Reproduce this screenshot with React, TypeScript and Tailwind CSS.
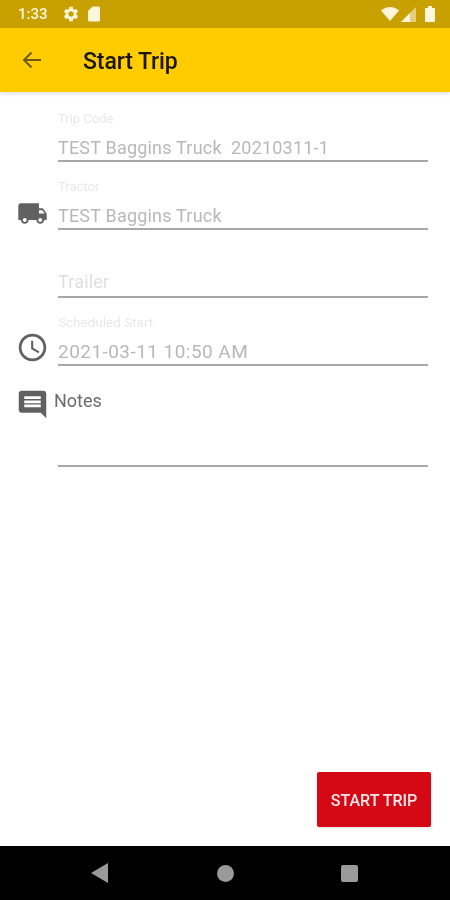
import type { ReactNode } from 'react';

const TRUCK = 'M20 8h-3V4H3c-1.1 0-2 .9-2 2v11h2c0 1.66 1.34 3 3 3s3-1.34 3-3h6c0 1.66 1.34 3 3 3s3-1.34 3-3h2v-5l-3-4zM6 18.5c-.83 0-1.5-.67-1.5-1.5s.67-1.5 1.5-1.5 1.5.67 1.5 1.5-.67 1.5-1.5 1.5zm13.5-9l1.96 2.5H17V9.5h2.5zm-1.5 9c-.83 0-1.5-.67-1.5-1.5s.67-1.5 1.5-1.5 1.5.67 1.5 1.5-.67 1.5-1.5 1.5z';
const CLOCK = 'M11.99 2C6.47 2 2 6.48 2 12s4.47 10 9.99 10C17.52 22 22 17.52 22 12S17.52 2 11.99 2zM12 20c-4.42 0-8-3.58-8-8s3.58-8 8-8 8 3.58 8 8-3.58 8-8 8zm.5-13H11v6l5.25 3.15.75-1.23-4.5-2.67z';
const NOTES = 'M21.99 4c0-1.1-.89-2-1.99-2H4c-1.1 0-2 .9-2 2v12c0 1.1.9 2 2 2h14l4 4-.01-18zM18 14H6v-2h12v2zm0-3H6V9h12v2zm0-3H6V6h12v2z';
const GEAR = 'M19.14 12.94c.04-.3.06-.61.06-.94 0-.32-.02-.64-.07-.94l2.03-1.58c.18-.14.23-.41.12-.61l-1.92-3.32c-.12-.22-.37-.29-.59-.22l-2.39.96c-.5-.38-1.03-.7-1.62-.94l-.36-2.54c-.04-.24-.24-.41-.48-.41h-3.84c-.24 0-.43.17-.47.41l-.36 2.54c-.59.24-1.13.57-1.62.94l-2.39-.96c-.22-.08-.47 0-.59.22L2.74 8.87c-.12.21-.08.47.12.61l2.03 1.58c-.05.3-.09.63-.09.94s.02.64.07.94l-2.03 1.58c-.18.14-.23.41-.12.61l1.92 3.32c.12.22.37.29.59.22l2.39-.96c.5.38 1.03.7 1.62.94l.36 2.54c.05.24.24.41.48.41h3.84c.24 0 .44-.17.47-.41l.36-2.54c.59-.24 1.13-.56 1.62-.94l2.39.96c.22.08.47 0 .59-.22l1.92-3.32c.12-.22.07-.47-.12-.61l-2.01-1.58zM12 15.6c-1.98 0-3.6-1.62-3.6-3.6s1.62-3.6 3.6-3.6 3.6 1.62 3.6 3.6-1.62 3.6-3.6 3.6z';
const SD = 'M18 2h-8L4 8v12c0 1.1.9 2 2 2h12c1.1 0 2-.9 2-2V4c0-1.1-.9-2-2-2z';

function Icon({ d, size, className }: { d: string; size: number; className?: string }) {
  return (
    <svg width={size} height={size} viewBox="0 0 24 24" fill="currentColor" className={className}>
      <path d={d} />
    </svg>
  );
}

function Field({ label, value, placeholder, icon, valueClass, labelClass }: { label?: string; value?: string; placeholder?: string; icon?: ReactNode; valueClass?: string; labelClass?: string }) {
  return (
    <div className="flex h-[53px] mb-[15px]">
      <div className="w-[58px] flex items-end justify-start pl-[17px] pb-[1px] shrink-0">{icon}</div>
      <div className="w-[370px] flex flex-col border-b-2 border-[#a8a8a8]">
        <div className={`h-[21px] leading-[19px] text-[#e8e8e8] ${labelClass ?? 'text-[13px]'}`}>{label}</div>
        <div className={`h-[30px] whitespace-pre ${placeholder ? 'leading-[32px] text-[#dedede]' : 'leading-[35px] text-[#b8b8b8]'} ${valueClass ?? 'text-[18px] tracking-[0.2px]'}`}>
          {value ?? placeholder}
        </div>
      </div>
    </div>
  );
}

export default function App() {
  return (
    <div className="w-[450px] h-[900px] flex flex-col bg-white overflow-hidden blur-[0.5px] font-['Roboto',sans-serif]">
      {/* Status bar */}
      <div className="h-[28px] shrink-0 bg-[#c8a000] flex items-center pl-[18px] pr-[15px] text-[#fdf6dc]">
        <span className="text-[15px] font-medium w-[44px]">1:33</span>
        <Icon d={GEAR} size={18} className="mr-[5px]" />
        <Icon d={SD} size={18} />
        <div className="flex-1" />
        <svg width="18" height="14" viewBox="0 0 18 14" fill="currentColor" className="mr-[2px]">
          <path d="M0 3.5C2.5 1.2 5.6 0 9 0s6.500 1.200 9 3.500L9 14z" />
        </svg>
        <svg width="15" height="15" viewBox="0 0 15 15" className="mr-[9px]">
          <path d="M15 0v15H0z" fill="#e3cf7d" />
          <path d="M9 6v9H0z" fill="#fdf6dc" />
        </svg>
        <svg width="10" height="16" viewBox="0 0 10 16" fill="currentColor">
          <path d="M3 0h4v2h2c.6 0 1 .4 1 1v12c0 .6-.4 1-1 1H1c-.6 0-1-.4-1-1V3c0-.6.4-1 1-1h2z" />
        </svg>
      </div>

      {/* App bar */}
      <div className="h-[64px] shrink-0 bg-[#ffcc00] flex items-center pl-[20px] shadow-[0_2px_4px_rgba(0,0,0,0.12)] relative">
        <svg width="24" height="24" viewBox="0 0 24 24" fill="none" stroke="#6b5a10" strokeWidth="2" className="mr-[39px]">
          <path d="M21 12H4M11.500 4.500 4 12l7.500 7.500" />
        </svg>
        <h1 className="text-[23px] font-medium text-[#1a1608] pt-[4px] tracking-[-0.1px]">Start Trip</h1>
      </div>

      {/* Form */}
      <div className="flex-1 flex flex-col pt-[17px]">
        <Field label="Trip Code" value="TEST Baggins Truck  20210311-1" />
        <Field label="Tractor" value="TEST Baggins Truck" icon={<Icon d={TRUCK} size={31} className="text-[#616161]" />} />
        <Field placeholder="Trailer" />
        <Field label="Scheduled Start" labelClass="text-[13.5px]" valueClass="text-[19px] tracking-[0.45px]" value="2021-03-11 10:50 AM" icon={<Icon d={CLOCK} size={33} className="text-[#616161] -ml-[1px] mb-[1px]" />} />
        <div className="flex h-[86px]">
          <div className="w-[54px] pl-[16px] pt-[7px] shrink-0">
            <Icon d={NOTES} size={33} className="text-[#616161]" />
          </div>
          <div className="w-[374px] flex flex-col">
            <div className="text-[18px] leading-[24px] pt-[8px] text-[#6b6b6b]">Notes</div>
            <div className="mt-auto ml-[4px] border-b-2 border-[#a8a8a8]" />
          </div>
        </div>
      </div>

      {/* Action */}
      <div className="flex justify-end pr-[19px] pb-[19px]">
        <button className="w-[114px] h-[55px] pt-[2px] rounded-[2px] bg-[#d50916] text-[#fde8e8] text-[16px] font-medium shadow-sm">
          START TRIP
        </button>
      </div>

      {/* Navigation bar */}
      <div className="h-[54px] shrink-0 bg-black flex items-center justify-center text-[#9a9a9a]">
        <div className="relative w-[450px] h-[54px]">
          <svg width="18" height="20" viewBox="0 0 18 20" fill="currentColor" className="absolute left-[91px] top-[17px]">
            <path d="M17 0v20L0 10z" />
          </svg>
          <div className="absolute left-[217px] top-[19px] w-[17px] h-[17px] rounded-full bg-[#9a9a9a]" />
          <div className="absolute left-[341px] top-[19px] w-[17px] h-[17px] rounded-[2px] bg-[#9a9a9a]" />
        </div>
      </div>
    </div>
  );
}
